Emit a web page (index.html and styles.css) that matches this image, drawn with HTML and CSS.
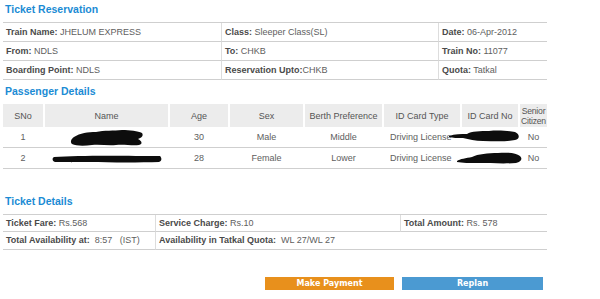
FILE: index.html
```html
<!DOCTYPE html>
<html>
<head>
<meta charset="utf-8">
<link rel="stylesheet" href="styles.css">
</head>
<body>
<div class="page">
  <h2 class="sec">Ticket Reservation</h2>
  <div class="info">
    <div class="cell c1"><b>Train Name:</b> JHELUM EXPRESS</div>
    <div class="cell c2"><b>Class:</b> Sleeper Class(SL)</div>
    <div class="cell"><b>Date:</b> 06-Apr-2012</div>
    <div class="cell c1"><b>From:</b> NDLS</div>
    <div class="cell c2"><b>To:</b> CHKB</div>
    <div class="cell"><b>Train No:</b> 11077</div>
    <div class="cell c1"><b>Boarding Point:</b> NDLS</div>
    <div class="cell c2"><b>Reservation Upto:</b>CHKB</div>
    <div class="cell"><b>Quota:</b> Tatkal</div>
  </div>

  <h2 class="sec sec-pass">Passenger Details</h2>
  <div class="ptable">
    <div class="prow phead">
      <div class="pc">SNo</div>
      <div class="pc">Name</div>
      <div class="pc">Age</div>
      <div class="pc">Sex</div>
      <div class="pc">Berth Preference</div>
      <div class="pc">ID Card Type</div>
      <div class="pc">ID Card No</div>
      <div class="pc senior">Senior Citizen</div>
    </div>
    <div class="prow pdata">
      <div class="pc">1</div>
      <div class="pc blobhost">
        <svg class="blob nb1" width="74" height="16" viewBox="0 0 74 16"><path d="M4 7 C10 3 18 2 26 2 C34 0 44 1 52 0 C60 0 68 1 72 3 C74 6 71 8 68 9 C72 11 73 14 69 15 C62 16 54 14 46 15 C38 16 30 14 22 15 C14 16 6 16 2 14 C0 12 1 9 4 7 Z"/></svg>
      </div>
      <div class="pc">30</div>
      <div class="pc">Male</div>
      <div class="pc">Middle</div>
      <div class="pc left">Driving License</div>
      <div class="pc blobhost">
        <svg class="blob ib1" width="71" height="12" viewBox="0 0 71 12"><path d="M0 6 C6 4 12 4 18 4 C22 1 32 1 40 1 C50 0 60 1 66 2 C71 4 71 9 66 10 C56 12 44 11 34 11 C26 11 20 9 14 8 C8 8 4 8 0 7 Z"/></svg>
      </div>
      <div class="pc">No</div>
    </div>
    <div class="prow pdata">
      <div class="pc">2</div>
      <div class="pc blobhost">
        <svg class="blob nb2" width="110" height="8" viewBox="0 0 110 8"><path d="M2 2 C30 0 80 1 108 1 C110 3 110 6 107 7 C80 8 30 7 3 7 C0 6 0 3 2 2 Z"/></svg>
      </div>
      <div class="pc">28</div>
      <div class="pc">Female</div>
      <div class="pc">Lower</div>
      <div class="pc left">Driving License</div>
      <div class="pc blobhost">
        <svg class="blob ib2" width="66" height="12" viewBox="0 0 66 12"><path d="M1 9 C4 7 10 6 16 5 C22 2 32 1 42 1 C52 0 60 1 64 4 C67 7 65 10 60 11 C48 12 34 11 22 11 C14 11 6 11 1 10 Z"/></svg>
      </div>
      <div class="pc">No</div>
    </div>
  </div>

  <h2 class="sec sec-ticket">Ticket Details</h2>
  <div class="tdet">
    <div class="tc t1 r1"><b>Ticket Fare:</b> Rs.568</div>
    <div class="tc t2 r1"><b>Service Charge:</b> Rs.10</div>
    <div class="tc r1"><b>Total Amount:</b> Rs. 578</div>
    <div class="tc t1 r2"><b>Total Availability at:</b>&nbsp; 8:57 &nbsp;&nbsp;(IST)</div>
    <div class="tc span2 r2"><b>Availability in Tatkal Quota:</b>&nbsp; WL 27/WL 27</div>
  </div>

  <div class="actions">
    <button class="btn pay">Make Payment</button>
    <button class="btn replan">Replan</button>
  </div>
</div>
</body>
</html>
```

FILE: styles.css
```css
html, body {
  margin: 0;
  padding: 0;
  background: #ffffff;
}
body {
  font-family: "Liberation Sans", Arial, sans-serif;
  font-size: 9px;
  color: #5e5e5e;
}
b {
  color: #4a4a4a;
}
.page {
  width: 544px;
  margin-left: 3px;
  padding-top: 3px;
}
.sec {
  margin: 0 0 0 2px;
  font-size: 10.5px;
  line-height: 13px;
  font-weight: bold;
  color: #1b8bd4;
}
.sec-pass {
  margin-top: 5px;
}
.sec-ticket {
  margin-top: 26px;
}

/* reservation info */
.info {
  margin-top: 6px;
  display: grid;
  grid-template-columns: 219px 217px 1fr;
  border-top: 1px solid #cfcfcf;
}
.cell {
  height: 19px;
  box-sizing: border-box;
  border-bottom: 1px solid #cfcfcf;
  padding-left: 3px;
  line-height: 18px;
  white-space: nowrap;
}
.c1, .c2 {
  border-right: 1px solid #dddddd;
}

/* passenger table */
.ptable {
  margin-top: 6px;
}
.prow {
  display: grid;
  grid-template-columns: 40px 123px 58px 73px 77px 76px 56px 27px;
  column-gap: 2px;
}
.pc {
  display: flex;
  align-items: center;
  justify-content: center;
  text-align: center;
  white-space: nowrap;
}
.phead {
  height: 23px;
}
.phead .pc {
  background: #ececec;
  line-height: 10px;
  white-space: normal;
  color: #555;
}
.phead .senior {
  font-size: 8.6px;
  letter-spacing: -0.2px;
  overflow: visible;
}
.pdata {
  height: 21px;
  box-sizing: border-box;
  border-bottom: 1px solid #cfcfcf;
}
.pdata .pc.left {
  justify-content: flex-start;
  padding-left: 6px;
}
.blobhost {
  position: relative;
}
.blob {
  position: absolute;
  fill: #0d0d0d;
}
.nb1 { left: 25px; top: 3px; }
.nb2 { left: 7px; top: 7px; }
.ib1 { left: -13px; top: 3px; }
.ib2 { left: -6px; top: 4px; }

/* ticket details */
.tdet {
  margin-top: 6px;
  display: grid;
  grid-template-columns: 153px 245px 1fr;
  border-top: 1px solid #cfcfcf;
}
.tc {
  box-sizing: border-box;
  border-bottom: 1px solid #cfcfcf;
  padding-left: 3px;
  white-space: nowrap;
}
.r1 {
  height: 17px;
  line-height: 16px;
}
.r2 {
  height: 18px;
  line-height: 17px;
}
.t1, .t2 {
  border-right: 1px solid #dddddd;
}
.span2 {
  grid-column: span 2;
}

/* buttons */
.actions {
  margin-top: 27px;
  display: flex;
  justify-content: flex-end;
  gap: 8px;
  padding-right: 4px;
}
.btn {
  border: 0;
  margin: 0;
  padding: 0;
  height: 13px;
  font-family: "DejaVu Sans", Verdana, sans-serif;
  font-weight: bold;
  font-size: 8px;
  line-height: 13px;
  color: #ffffff;
  text-align: center;
}
.pay {
  width: 129px;
  background: #e8901c;
}
.replan {
  width: 141px;
  background: #4b9ad2;
}
```
